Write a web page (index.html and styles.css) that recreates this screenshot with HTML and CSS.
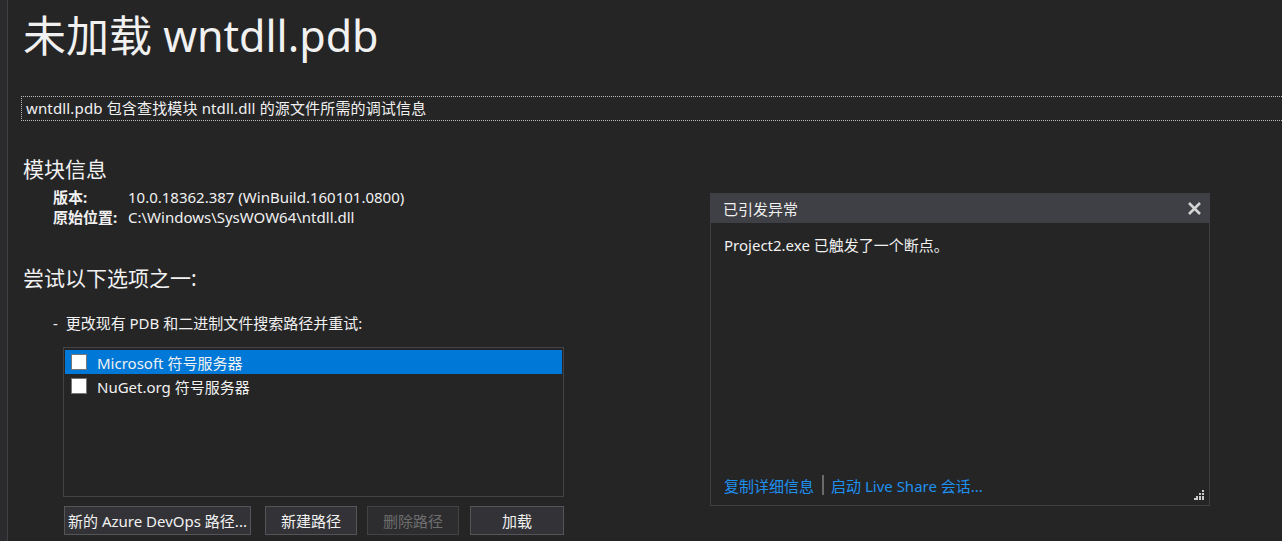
FILE: index.html
```html
<!DOCTYPE html>
<html lang="zh-CN">
<head>
  <meta charset="UTF-8">
  <title>未加载 wntdll.pdb</title>
  <link rel="stylesheet" href="styles.css">
</head>
<body>
  <div class="gutter"></div>
  <div class="page">
    <h1 class="title">未加载 wntdll.pdb</h1>
    <div class="desc">wntdll.pdb 包含查找模块 ntdll.dll 的源文件所需的调试信息</div>

    <div class="main">
      <div class="left">
        <h2 class="heading">模块信息</h2>
        <div class="info">
          <span class="info-label">版本:</span>
          <span class="info-value">10.0.18362.387 (WinBuild.160101.0800)</span>
          <span class="info-label">原始位置:</span>
          <span class="info-value">C:\Windows\SysWOW64\ntdll.dll</span>
        </div>

        <h2 class="heading heading-try">尝试以下选项之一:</h2>
        <div class="option">-&nbsp; 更改现有 PDB 和二进制文件搜索路径并重试:</div>

        <div class="listbox">
          <div class="list-item selected"><span class="check"></span>Microsoft 符号服务器</div>
          <div class="list-item"><span class="check"></span>NuGet.org 符号服务器</div>
        </div>

        <div class="buttons">
          <button class="btn btn-azure">新的 Azure DevOps 路径...</button>
          <button class="btn btn-new">新建路径</button>
          <button class="btn btn-del" disabled>删除路径</button>
          <button class="btn btn-load">加载</button>
        </div>
      </div>

      <div class="popup">
        <div class="popup-head">
          <span>已引发异常</span>
          <svg class="close" width="15" height="15" viewBox="0 0 15 15">
            <path d="M2 2 L13 13 M13 2 L2 13" stroke="#d4d4d4" stroke-width="2.6"/>
          </svg>
        </div>
        <div class="popup-body">
          <div class="popup-msg">Project2.exe 已触发了一个断点。</div>
          <div class="popup-links">
            <a class="link">复制详细信息</a>
            <span class="sep"></span>
            <a class="link">启动 Live Share 会话...</a>
          </div>
          <svg class="grip" width="10" height="10" viewBox="0 0 10 10">
            <rect x="8" y="0" width="2" height="2" fill="#ccc"/>
            <rect x="5" y="3" width="2" height="2" fill="#ccc"/>
            <rect x="8" y="3" width="2" height="2" fill="#ccc"/>
            <rect x="2" y="6" width="2" height="2" fill="#ccc"/>
            <rect x="5" y="6" width="2" height="2" fill="#ccc"/>
            <rect x="8" y="6" width="2" height="2" fill="#ccc"/>
            <rect x="0" y="8" width="2" height="2" fill="#ccc"/>
            <rect x="2" y="8" width="2" height="2" fill="#ccc"/>
            <rect x="5" y="8" width="2" height="2" fill="#ccc"/>
            <rect x="8" y="8" width="2" height="2" fill="#ccc"/>
          </svg>
        </div>
      </div>
    </div>
  </div>
</body>
</html>
```

FILE: styles.css
```css
* {
  margin: 0;
  padding: 0;
  box-sizing: border-box;
}

body {
  font-family: "Noto Sans", "Noto Sans CJK SC", sans-serif;
  font-size: 15px;
  background: #252526;
  color: #f1f1f1;
  display: flex;
  height: 541px;
  overflow: hidden;
}

.gutter {
  width: 8px;
  background: #2b2b2d;
  border-right: 1px solid #3f3f46;
  flex-shrink: 0;
}

.page {
  flex: 1;
  padding: 6px 0 0 15px;
}

.title {
  font-size: 43px;
  font-weight: 400;
  line-height: 60px;
}

.desc {
  margin-top: 30px;
  margin-left: -2px;
  border: 1px dotted #bbb;
  border-right: none;
  height: 25px;
  padding: 0 0 0 4px;
  line-height: 23px;
  letter-spacing: 0.15px;
}

.main {
  display: flex;
}

.left {
  width: 565px;
}

.heading {
  font-size: 21px;
  font-weight: 400;
  line-height: 28px;
  margin-top: 34px;
}

.info {
  display: grid;
  grid-template-columns: 75px auto;
  margin: 4px 0 0 30px;
  line-height: 20px;
}

.info-label {
  font-weight: 700;
}

.heading-try {
  margin-top: 37px;
}

.option {
  margin: 21px 0 0 30px;
  line-height: 20px;
}

.listbox {
  margin: 14px 0 0 40px;
  width: 501px;
  height: 150px;
  border: 1px solid #434346;
  padding: 2px 1px;
}

.list-item {
  height: 24px;
  display: flex;
  align-items: center;
  padding-left: 6px;
}

.list-item.selected {
  background: #0078d7;
}

.check {
  width: 16px;
  height: 16px;
  background: #fff;
  border: 1px solid #777;
  margin-right: 10px;
}

.buttons {
  display: flex;
  margin: 9px 0 0 41px;
}

.btn {
  font-family: inherit;
  font-size: 15px;
  height: 29px;
  background: #333337;
  color: #f1f1f1;
  border: 1px solid #555558;
  width: 92px;
}

.btn-azure {
  width: 187px;
  padding: 0;
  white-space: nowrap;
}

.btn-new {
  margin-left: 14px;
}

.btn-del {
  margin-left: 10px;
  color: #6d6d6d;
  background: #2d2d30;
  border-color: #434346;
}

.btn-load {
  margin-left: 11px;
  width: 94px;
}

.popup {
  margin: 72px 0 0 122px;
  width: 500px;
  height: 313px;
  display: flex;
  flex-direction: column;
}

.popup-head {
  height: 30px;
  background: #3f3f46;
  display: flex;
  align-items: center;
  justify-content: space-between;
  padding: 0 8px 0 13px;
}

.popup-body {
  flex: 1;
  border: 1px solid #3f3f46;
  border-top: none;
  position: relative;
  padding: 12px 13px 0 13px;
  display: flex;
  flex-direction: column;
}

.popup-msg {
  line-height: 20px;
  flex: 1;
}

.popup-links {
  display: flex;
  align-items: center;
  height: 20px;
  margin-bottom: 10px;
  color: #1e90f0;
}

.sep {
  width: 2px;
  height: 20px;
  background: #6a6a6a;
  margin: 0 7px 0 8px;
}

.grip {
  position: absolute;
  right: 5px;
  bottom: 5px;
}
```
